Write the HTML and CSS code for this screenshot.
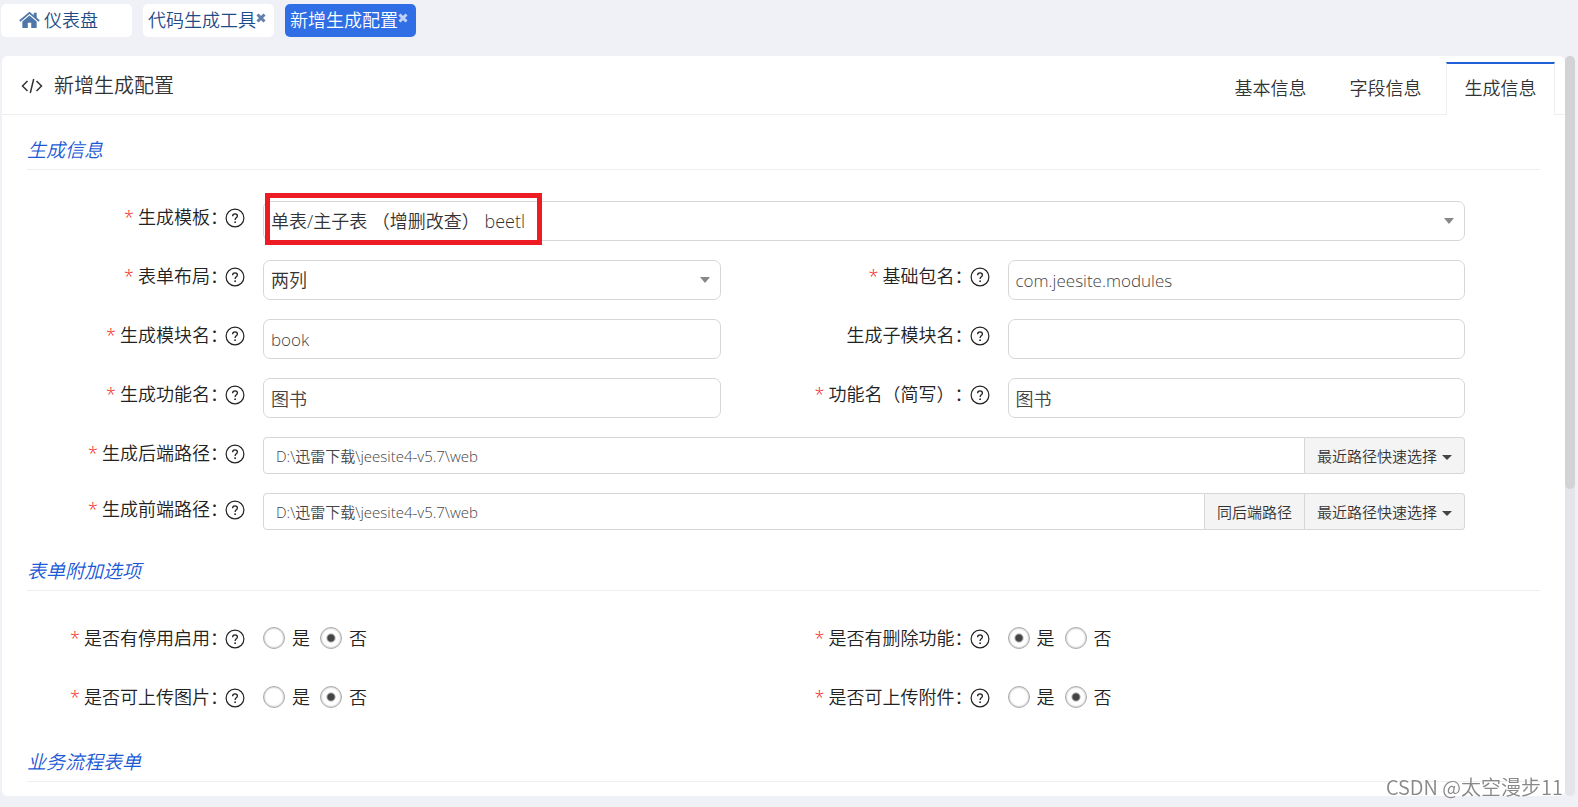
FILE: index.html
```html
<!DOCTYPE html>
<html lang="zh-CN">
<head>
<meta charset="utf-8">
<title>新增生成配置</title>
<link rel="stylesheet" href="styles.css">
</head>
<body>
<svg class="sprite" aria-hidden="true">
  <symbol id="help" viewBox="0 0 20 20">
    <circle cx="10" cy="10" r="8.900" fill="none" stroke="currentColor" stroke-width="1.2"/>
    <path d="M7.600 8.200C7.600 6.600 8.600 5.800 10 5.800s2.400.9 2.400 2.200c0 1.800-2.300 1.900-2.300 3.900" fill="none" stroke="currentColor" stroke-width="1.3"/>
    <circle cx="10.1" cy="14.2" r=".9" fill="currentColor"/>
  </symbol>
  <symbol id="close" viewBox="0 0 10 10">
    <path d="M1.500 1.500l7 7M8.500 1.500l-7 7" stroke="currentColor" stroke-width="3"/>
  </symbol>
</svg>

<nav class="page-tabs">
  <a class="page-tab page-tab-home" href="#"><svg class="home-icon" viewBox="0 0 22 18"><path fill="currentColor" d="M11 4.2 3.5 10.6V16.6q0 .9.9.9H9.2V12h3.6v5.5h4.8q.9 0 .9-.9V10.600z"/><path fill="none" stroke="currentColor" stroke-width="1.900" d="M.9 10 11 1.500 21.100 10"/><path fill="currentColor" d="M15.500 1.500h3V7.800l-3-2.500z"/></svg>仪表盘</a>
  <a class="page-tab" href="#">代码生成工具<svg class="close-icon"><use href="#close"/></svg></a>
  <a class="page-tab page-tab-active" href="#">新增生成配置<svg class="close-icon"><use href="#close"/></svg></a>
</nav>

<div class="workspace">
  <main class="panel">
    <header class="panel-header">
      <h1 class="panel-title"><svg class="code-icon" viewBox="0 0 22 18"><path d="M6.500 4 1.500 9l5 5M15.500 4l5 5-5 5M12.700 2 9.300 16" fill="none" stroke="currentColor" stroke-width="1.500"/></svg>新增生成配置</h1>
      <nav class="info-tabs">
        <a class="info-tab" href="#">基本信息</a>
        <a class="info-tab" href="#">字段信息</a>
        <a class="info-tab info-tab-active" href="#">生成信息</a>
      </nav>
    </header>

    <form class="form">
      <h2 class="section-title">生成信息</h2>
      <div class="fields">
        <label class="label" for="tpl"><span class="required">*</span>生成模板：<svg class="help-icon"><use href="#help"/></svg></label>
        <div class="select field-wide">
          <select class="control" id="tpl"><option>单表/主子表 （增删改查） beetl</option></select>
          <span class="highlight"></span>
        </div>

        <label class="label" for="layout"><span class="required">*</span>表单布局：<svg class="help-icon"><use href="#help"/></svg></label>
        <div class="select"><select class="control" id="layout"><option>两列</option></select></div>
        <label class="label" for="pkg"><span class="required">*</span>基础包名：<svg class="help-icon"><use href="#help"/></svg></label>
        <input class="control control-code" id="pkg" type="text" value="com.jeesite.modules">

        <label class="label" for="mod"><span class="required">*</span>生成模块名：<svg class="help-icon"><use href="#help"/></svg></label>
        <input class="control control-code" id="mod" type="text" value="book">
        <label class="label" for="submod">生成子模块名：<svg class="help-icon"><use href="#help"/></svg></label>
        <input class="control control-code" id="submod" type="text">

        <label class="label" for="fn"><span class="required">*</span>生成功能名：<svg class="help-icon"><use href="#help"/></svg></label>
        <input class="control" id="fn" type="text" value="图书">
        <label class="label" for="fns"><span class="required">*</span>功能名（简写）：<svg class="help-icon"><use href="#help"/></svg></label>
        <input class="control" id="fns" type="text" value="图书">

        <label class="label" for="back"><span class="required">*</span>生成后端路径：<svg class="help-icon"><use href="#help"/></svg></label>
        <div class="path-group field-wide">
          <input class="path-input" id="back" type="text" value="D:\迅雷下载\jeesite4-v5.7\web">
          <button class="path-button" type="button">最近路径快速选择<span class="caret"></span></button>
        </div>

        <label class="label" for="front"><span class="required">*</span>生成前端路径：<svg class="help-icon"><use href="#help"/></svg></label>
        <div class="path-group field-wide">
          <input class="path-input" id="front" type="text" value="D:\迅雷下载\jeesite4-v5.7\web">
          <button class="path-button" type="button">同后端路径</button>
          <button class="path-button" type="button">最近路径快速选择<span class="caret"></span></button>
        </div>
      </div>

      <h2 class="section-title">表单附加选项</h2>
      <div class="fields fields-radio">
        <span class="label" id="l1"><span class="required">*</span>是否有停用启用：<svg class="help-icon"><use href="#help"/></svg></span>
        <div class="radios" role="radiogroup" aria-labelledby="l1">
          <label class="radio"><input type="radio" name="r1">是</label>
          <label class="radio"><input type="radio" name="r1" checked>否</label>
        </div>
        <span class="label" id="l2"><span class="required">*</span>是否有删除功能：<svg class="help-icon"><use href="#help"/></svg></span>
        <div class="radios" role="radiogroup" aria-labelledby="l2">
          <label class="radio"><input type="radio" name="r2" checked>是</label>
          <label class="radio"><input type="radio" name="r2">否</label>
        </div>
        <span class="label" id="l3"><span class="required">*</span>是否可上传图片：<svg class="help-icon"><use href="#help"/></svg></span>
        <div class="radios" role="radiogroup" aria-labelledby="l3">
          <label class="radio"><input type="radio" name="r3">是</label>
          <label class="radio"><input type="radio" name="r3" checked>否</label>
        </div>
        <span class="label" id="l4"><span class="required">*</span>是否可上传附件：<svg class="help-icon"><use href="#help"/></svg></span>
        <div class="radios" role="radiogroup" aria-labelledby="l4">
          <label class="radio"><input type="radio" name="r4">是</label>
          <label class="radio"><input type="radio" name="r4" checked>否</label>
        </div>
      </div>

      <h2 class="section-title">业务流程表单</h2>
    </form>
  </main>
  <div class="scroll-track"><div class="scroll-thumb"></div></div>
</div>
<div class="watermark">CSDN @太空漫步11</div>
</body>
</html>
```
FILE: styles.css
```css
* {
  box-sizing: border-box;
}

body {
  margin: 0;
  height: 100vh;
  display: flex;
  flex-direction: column;
  overflow: hidden;
  background: #f0f1f6;
  color: #222;
  font-family: "Open Sans", "Noto Sans CJK SC", sans-serif;
  font-size: 18px;
  font-weight: 350;
  line-height: 24px;
  text-spacing-trim: space-all;
}

input,
select,
button {
  margin: 0;
  font: inherit;
}

a {
  color: inherit;
  text-decoration: none;
}

.sprite {
  position: absolute;
  width: 0;
  height: 0;
}

.page-tabs {
  display: flex;
  gap: 11px;
  padding: 4px 1px 19px;
}

.page-tab {
  display: flex;
  align-items: center;
  width: 131px;
  height: 33px;
  padding: 0 0 2px 5px;
  border-radius: 5px;
  background: #fff;
  color: #1f4b87;
  white-space: nowrap;
}

.page-tab-home {
  padding-left: 18px;
}

.page-tab-active {
  background: #2f6ee5;
  color: #fff;
}

.home-icon {
  width: 21px;
  height: 18px;
  margin-right: 4px;
  color: #4d76aa;
}

.close-icon {
  width: 10px;
  height: 10px;
  margin-bottom: 3px;
  opacity: 0.7;
}

.workspace {
  flex: 1;
  display: flex;
  min-height: 0;
  padding: 0 3px 11px 2px;
}

.panel {
  flex: 1;
  overflow: hidden;
  border-radius: 6px;
  background: #fff;
}

.panel-header {
  display: flex;
  justify-content: space-between;
  height: 59px;
  padding: 6px 10px 0 19px;
  border-bottom: 1px solid #eee;
}

.panel-title {
  display: flex;
  align-items: center;
  gap: 11px;
  height: 48px;
  margin: 0;
  color: #333;
  font-size: 20px;
  font-weight: inherit;
}

.code-icon {
  width: 22px;
  height: 18px;
}

.info-tabs {
  display: flex;
  gap: 6px;
  height: 53px;
}

.info-tab {
  width: 109px;
  padding-top: 12px;
  border: 1px solid transparent;
  border-top: 2px solid transparent;
  border-bottom: 0;
  color: #333;
  text-align: center;
}

.info-tab-active {
  border-color: #2160d8 #eee;
  background: #fff;
}

.form {
  padding: 22px 25px 0;
}

.section-title {
  margin: 0;
  padding-bottom: 5px;
  border-bottom: 1px solid #eee;
  color: #1a58d6;
  font-size: 19px;
  font-style: italic;
  font-weight: inherit;
  line-height: 27px;
}

.fields {
  display: grid;
  grid-template-columns: 218px 1fr 251px 1fr;
  gap: 19px 18px;
  padding: 31px 75px 28px 0;
}

.fields-radio {
  row-gap: 35px;
  padding: 35px 75px 40px 0;
}

.field-wide {
  grid-column: 2 / -1;
}

.label {
  display: flex;
  justify-content: flex-end;
  padding-top: 4px;
  white-space: nowrap;
}

.fields-radio .label {
  padding-top: 0;
}

.required {
  margin-right: 4px;
  color: #f01818;
}

.help-icon {
  width: 20px;
  height: 20px;
  margin: 3px 0 0 -3px;
}

.control {
  width: 100%;
  min-width: 0;
  height: 40px;
  padding: 0 7px;
  border: 1px solid #d7d7d7;
  border-radius: 7px;
  outline: 0;
  background: #fff;
  color: #444;
}

.control-code {
  font-size: 17px;
}

.select {
  position: relative;
}

.select .control {
  appearance: none;
  color: #333;
}

.select::after {
  content: "";
  position: absolute;
  top: 17px;
  right: 11px;
  border: 5px solid transparent;
  border-top: 6px solid #888;
  border-bottom: 0;
}

.highlight {
  position: absolute;
  top: -8px;
  left: 2px;
  width: 277px;
  height: 52px;
  border: 5px solid #ed1c24;
}

.path-group {
  display: flex;
  height: 37px;
  font-size: 15px;
}

.path-input {
  flex: 1;
  min-width: 0;
  padding: 0 12px;
  border: 1px solid #d7d7d7;
  border-radius: 4px 0 0 4px;
  color: #444;
}

.path-button {
  display: flex;
  align-items: center;
  padding: 0 12px;
  border: 1px solid #d7d7d7;
  border-left: 0;
  background: #f4f4f4;
  color: #333;
}

.path-button:last-child {
  border-radius: 0 4px 4px 0;
}

.caret {
  margin: 3px 0 0 5px;
  border: 5px solid transparent;
  border-top-color: #444;
  border-bottom: 0;
}

.radios {
  display: flex;
  gap: 10px;
}

.radio {
  display: flex;
  align-items: center;
  gap: 7px;
}

.radio input {
  appearance: none;
  width: 22px;
  height: 22px;
  border: 1px solid #aaa;
  border-radius: 50%;
  background: #fff;
  box-shadow: inset 0 0 2px #999;
}

.radio input:checked {
  background: radial-gradient(circle, #444 3px, #fff 5px);
}

.scroll-track {
  width: 10px;
  border-radius: 5px;
  background: #e4e5ea;
}

.scroll-thumb {
  height: 433px;
  border-radius: 5px;
  background: #d2d3d7;
}

.watermark {
  position: fixed;
  right: 15px;
  bottom: 8px;
  color: #888;
  font-family: "Noto Sans CJK SC", sans-serif;
  font-size: 20px;
}
```
